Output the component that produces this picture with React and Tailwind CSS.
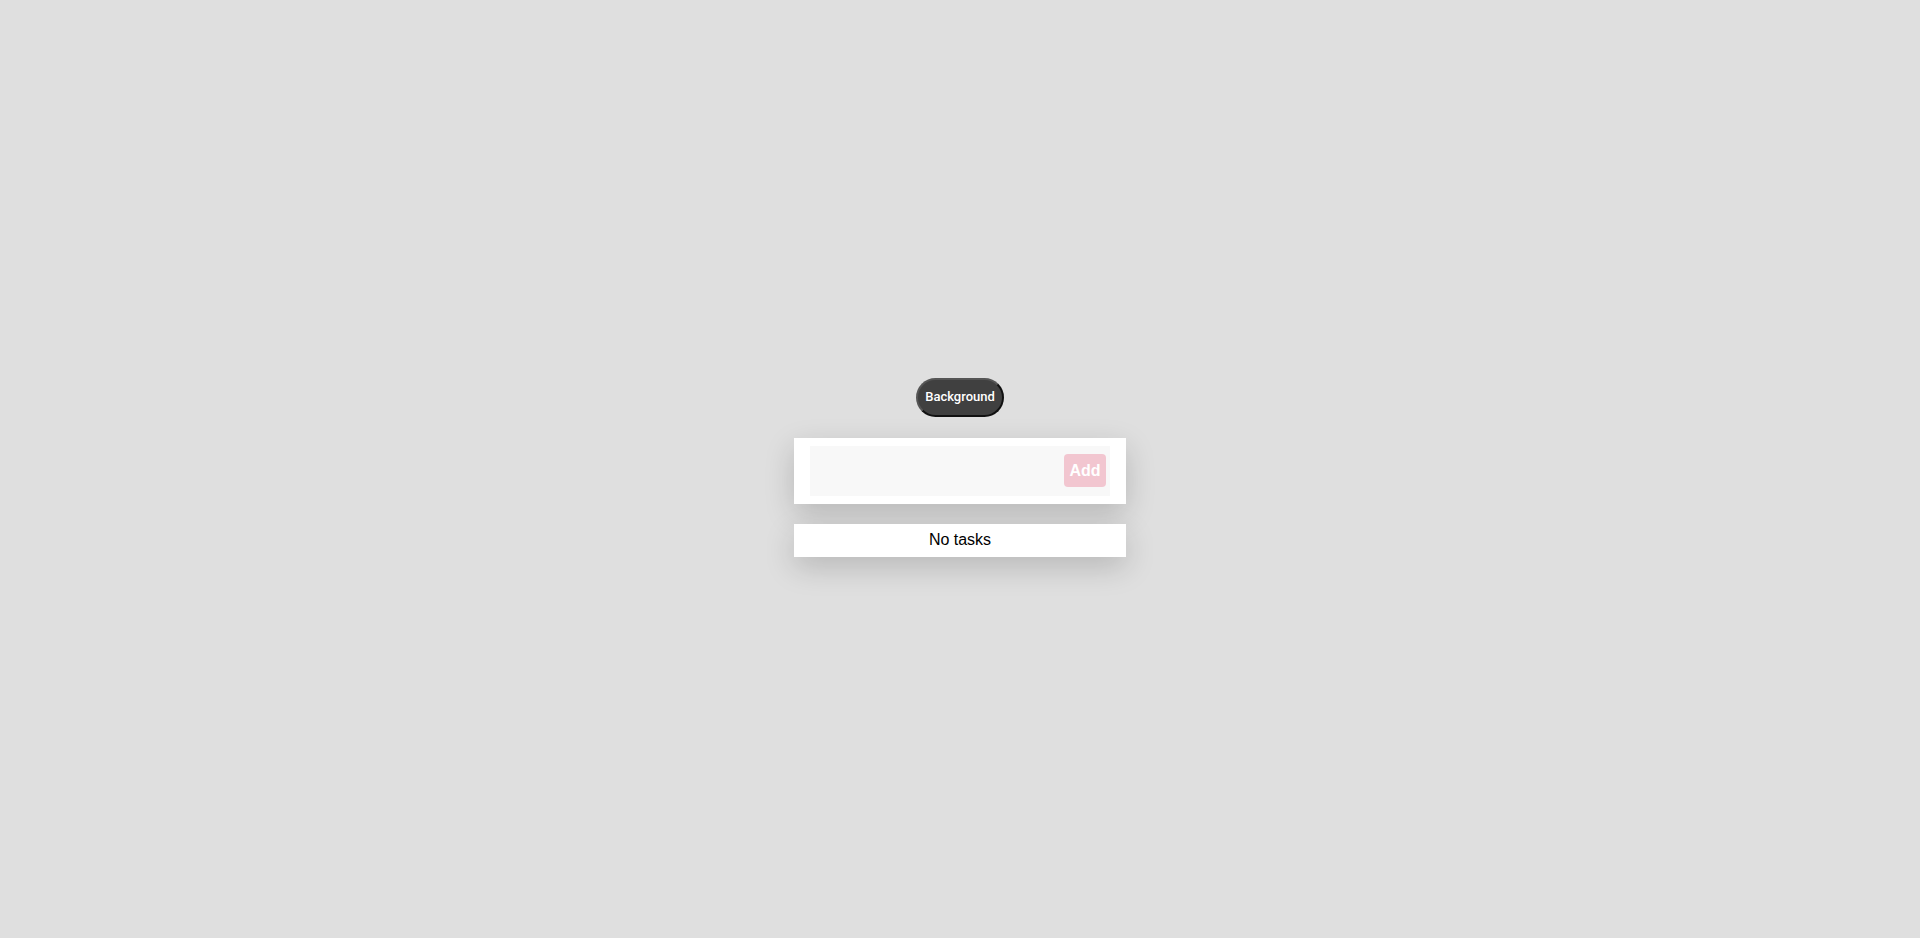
import React, { useState } from 'react';

const App = () => {
  const [text, setText] = useState('');
  const [tasks, setTasks] = useState([]);

  const addTask = () => {
    if (!text.trim()) return;
    setTasks([...tasks, text.trim()]);
    setText('');
  };

  return (
    <div className="min-h-screen w-full bg-[#dfdfdf] flex flex-col items-center justify-center pb-1 font-['Liberation_Sans',Arial,sans-serif]">
      <button className="h-[39px] px-[7px] rounded-full bg-[#404040] border-2 border-[#111] border-t-[#555] border-l-[#555] text-white text-[13px] font-medium font-['Roboto',Arial,sans-serif]">
        Background
      </button>

      <div className="mt-[21px] w-[332px] bg-white px-4 py-2 shadow-[0_10px_30px_rgba(0,0,0,0.18)]">
        <div className="h-[50px] bg-[#f8f8f8] flex items-center pr-1">
          <input
            value={text}
            onChange={(e) => setText(e.target.value)}
            className="flex-1 min-w-0 h-full bg-transparent px-3 text-base outline-none"
          />
          <button
            onClick={addTask}
            className="w-[42px] h-[33px] rounded-[4px] bg-[#f2c6d0] text-white text-base font-bold"
          >
            Add
          </button>
        </div>
      </div>

      <div className="mt-5 w-[332px] bg-white shadow-[0_10px_30px_rgba(0,0,0,0.18)]">
        {tasks.length > 0 ? tasks.map((t, i) => (
          <div key={i} className="h-[33px] flex items-center justify-center text-base text-black">{t}</div>
        )) : (
          <div className="h-[33px] flex items-center justify-center text-base text-black">No tasks</div>
        )}
      </div>
    </div>
  );
};

export default App;
